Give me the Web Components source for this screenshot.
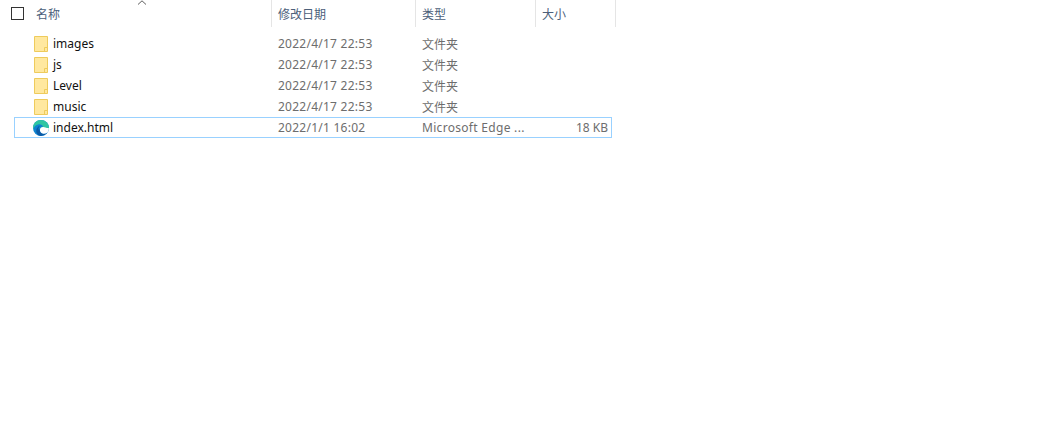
<!DOCTYPE html>
<html lang="zh-CN"><head><meta charset="utf-8"><title>Files</title>
<style>html,body{margin:0;background:#fff}</style>
</head><body>
<file-explorer>
  <list-header>
    <header-cell style="--w:272px;--pad:36px">名称</header-cell>
    <header-cell style="--w:144px">修改日期</header-cell>
    <header-cell style="--w:120px">类型</header-cell>
    <header-cell style="--w:80px">大小</header-cell>
  </list-header>
  <file-row icon="folder" name="images" date="2022/4/17 22:53" type="文件夹"></file-row>
  <file-row icon="folder" name="js" date="2022/4/17 22:53" type="文件夹"></file-row>
  <file-row icon="folder" name="Level" date="2022/4/17 22:53" type="文件夹"></file-row>
  <file-row icon="folder" name="music" date="2022/4/17 22:53" type="文件夹"></file-row>
  <file-row icon="edge" name="index.html" date="2022/1/1 16:02" type="Microsoft Edge ..." size="18 KB" focused></file-row>
</file-explorer>
<script>
const FONT = '"Noto Sans","Noto Sans CJK SC",sans-serif';
class FileExplorer extends HTMLElement {
  constructor() {
    super();
    this.attachShadow({mode: 'open'}).innerHTML = `<style>:host{display:flex;flex-direction:column;width:1040px;height:431px;overflow:hidden;background:#fff;font:12px ${FONT}}</style><slot></slot>`;
  }
}
class ListHeader extends HTMLElement {
  constructor() {
    super();
    this.attachShadow({mode: 'open'}).innerHTML = `<style>
      :host{display:flex;height:27px;margin-bottom:6px;position:relative}
      .check{position:absolute;left:11px;top:7px;width:11px;height:11px;border:1px solid #333;background:#fff}
      .sort{position:absolute;left:137px;top:0}
    </style>
    <span class="check"></span>
    <svg class="sort" width="10" height="5" viewBox="0 0 10 5"><path d="M1 4.500 5 .8l4 3.700" fill="none" stroke="#5f5f5f"/></svg>
    <slot></slot>`;
  }
}
class HeaderCell extends HTMLElement {
  constructor() {
    super();
    this.attachShadow({mode: 'open'}).innerHTML = `<style>:host{display:flex;align-items:center;box-sizing:border-box;flex:none;width:var(--w);padding-left:var(--pad,6px);border-right:1px solid #e5e5e5;color:#4c607a;font:12px ${FONT}}</style><slot></slot>`;
  }
}
class FolderIcon extends HTMLElement {
  constructor() {
    super();
    this.attachShadow({mode: 'open'}).innerHTML = `<style>:host{display:block;width:14px;height:16px}svg{display:block}</style>
    <svg width="14" height="16" viewBox="0 0 14 16"><path d="M.5.5h13v15H.5z" fill="#ffe89f" stroke="#eecb5c"/><path d="M10.500 15v-3.500h3" fill="none" stroke="#eecb5c"/></svg>`;
  }
}
class EdgeIcon extends HTMLElement {
  constructor() {
    super();
    this.attachShadow({mode: 'open'}).innerHTML = `<style>:host{display:block;width:16px;height:16px}svg{display:block}</style>
    <svg width="16" height="16" viewBox="0 0 16 16">
      <circle cx="8" cy="8" r="8" fill="#0f84d0"/>
      <path d="M8 0a8 8 0 0 1 8 8v1.500H6.900c.2-1.900 1.700-3.100 3.300-2.700C9.700 5 7.500 3.900 5.200 4.400 2.800 4.900 1.100 6.700.1 8.900-.4 4 3.200 0 8 0z" fill="#2fc6a2"/>
      <path d="M6.900 9.500c-.4 2.400 1.400 4.300 4 4.300 1.200 0 2.300-.4 3.200-1A8 8 0 0 1 8 16c-2.900-.3-5-2.700-4.700-5.800.2-2 1.700-3.900 3.800-4.400-1.200 1-1.700 2.300-1.700 3.700z" fill="#0b5aa6"/>
      <path d="M6.900 9.800c.1-1.700 1.600-3 3.300-2.900 1.500.1 2.800 1 5.600 1.100.2 1.700-.4 3.500-1.700 4.800-1.300.8-3 1.300-4.500.8-1.800-.6-2.800-2-2.700-3.800z" fill="#fff"/>
    </svg>`;
  }
}
class FileRow extends HTMLElement {
  constructor() {
    super();
    this.attachShadow({mode: 'open'});
  }
  connectedCallback() {
    const a = n => this.getAttribute(n) || '';
    const icon = a('icon') === 'edge' ? '<edge-icon></edge-icon>' : '<folder-icon></folder-icon>';
    this.shadowRoot.innerHTML = `<style>
      :host{display:grid;grid-template-columns:18px 20px 225px 144px 100px 1fr;align-items:center;box-sizing:border-box;width:598px;height:21px;margin-left:14px;border:1px solid transparent;font:12px ${FONT};color:#6d6d6d}
      :host([focused]){border-color:#99d1ff}
      .ic{grid-column:2;display:flex;padding-left:1px}
      :host([icon=edge]) .ic{padding-left:0}
      .name{color:#111}
      .date{letter-spacing:.25px}
      :host([focused]) .type{letter-spacing:.3px}
      .size{text-align:right;padding-right:3px}
      span{white-space:nowrap}
    </style>
    <span class="ic">${icon}</span><span class="name">${a('name')}</span><span class="date">${a('date')}</span><span class="type">${a('type')}</span><span class="size">${a('size')}</span>`;
  }
}
customElements.define('folder-icon', FolderIcon);
customElements.define('edge-icon', EdgeIcon);
customElements.define('header-cell', HeaderCell);
customElements.define('list-header', ListHeader);
customElements.define('file-row', FileRow);
customElements.define('file-explorer', FileExplorer);
</script>
</body></html>
